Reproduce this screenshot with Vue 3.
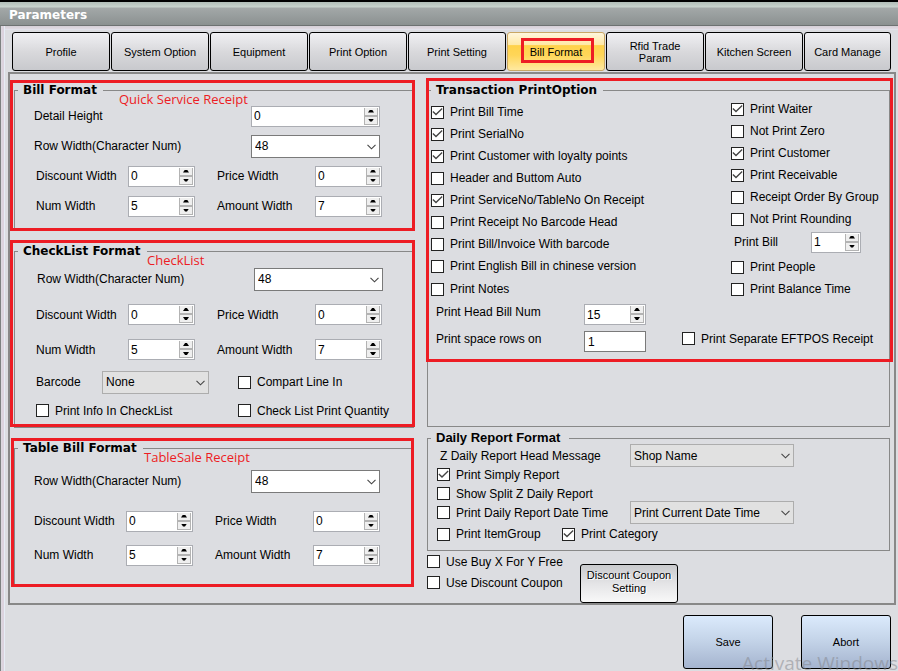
<script setup>
import { reactive, ref } from 'vue'

const tabs = [
  'Profile', 'System Option', 'Equipment', 'Print Option', 'Print Setting',
  'Bill Format', 'Rfid Trade Param', 'Kitchen Screen', 'Card Manage'
]
const activeTab = ref('Bill Format')

const formats = reactive([
  {
    id: 'bill', title: 'Bill Format', note: 'Quick Service Receipt', detail: 0, rowWidth: '48',
    widths: [
      [{ label: 'Discount Width', value: 0 }, { label: 'Price Width', value: 0 }],
      [{ label: 'Num Width', value: 5 }, { label: 'Amount Width', value: 7 }]
    ]
  },
  {
    id: 'checklist', title: 'CheckList Format', note: 'CheckList', rowWidth: '48', barcode: 'None',
    widths: [
      [{ label: 'Discount Width', value: 0 }, { label: 'Price Width', value: 0 }],
      [{ label: 'Num Width', value: 5 }, { label: 'Amount Width', value: 7 }]
    ],
    options: { info: false, line: false, quantity: false }
  },
  {
    id: 'table', title: 'Table Bill Format', note: 'TableSale Receipt', rowWidth: '48',
    widths: [
      [{ label: 'Discount Width', value: 0 }, { label: 'Price Width', value: 0 }],
      [{ label: 'Num Width', value: 5 }, { label: 'Amount Width', value: 7 }]
    ]
  }
])

const printLeft = reactive([
  { label: 'Print Bill Time', on: true },
  { label: 'Print SerialNo', on: true },
  { label: 'Print Customer with loyalty points', on: true },
  { label: 'Header and Buttom Auto', on: false },
  { label: 'Print ServiceNo/TableNo On Receipt', on: true },
  { label: 'Print Receipt No Barcode Head', on: false },
  { label: 'Print Bill/Invoice With barcode', on: false },
  { label: 'Print English Bill in chinese version', on: false },
  { label: 'Print Notes', on: false }
])
const printRightTop = reactive([
  { label: 'Print Waiter', on: true },
  { label: 'Not Print Zero', on: false },
  { label: 'Print Customer', on: true },
  { label: 'Print Receivable', on: true },
  { label: 'Receipt Order By Group', on: false },
  { label: 'Not Print Rounding', on: false }
])
const printRightBottom = reactive([
  { label: 'Print People', on: false },
  { label: 'Print Balance Time', on: false }
])

const form = reactive({
  printBill: 1, headNum: 15, spaceRows: '1', eftpos: false,
  headMessage: 'Shop Name', simply: true, split: false, dateTime: false,
  dateSource: 'Print Current Date Time', itemGroup: false, category: true,
  buyXY: false, coupon: false
})
</script>

<template>
  <main class="window">
    <header class="titlebar"><h1>Parameters</h1></header>
    <div class="body">
      <nav class="tabs">
        <button
          v-for="t in tabs" :key="t" type="button" class="tab"
          :class="{ active: t === activeTab }" @click="activeTab = t"
        >{{ t }}</button>
      </nav>

      <div class="panel">
        <div class="column left">
          <section v-for="f in formats" :key="f.id" class="section marked" :class="f.id">
            <fieldset class="group">
              <legend>{{ f.title }}</legend>
              <div class="rows">
                <div v-if="f.detail !== undefined" class="row wide">
                  <label :for="f.id + '-detail'">Detail Height</label>
                  <span class="spin">
                    <input :id="f.id + '-detail'" v-model.number="f.detail" type="number">
                    <button type="button" class="up" aria-label="Increase" @click="f.detail++"></button>
                    <button type="button" class="down" aria-label="Decrease" @click="f.detail--"></button>
                  </span>
                </div>
                <div class="row wide">
                  <label :for="f.id + '-row'">Row Width(Character Num)</label>
                  <span class="combo white">
                    <select :id="f.id + '-row'" v-model="f.rowWidth"><option>48</option><option>32</option></select>
                    <svg viewBox="0 0 9 6" aria-hidden="true"><path d="M.5 .8 4.5 4.8 8.5 .8" /></svg>
                  </span>
                </div>
                <div v-for="(pair, i) in f.widths" :key="i" class="row quad">
                  <template v-for="(w, j) in pair" :key="w.label">
                    <label :for="f.id + i + j">{{ w.label }}</label>
                    <span class="spin">
                      <input :id="f.id + i + j" v-model.number="w.value" type="number">
                      <button type="button" class="up" aria-label="Increase" @click="w.value++"></button>
                      <button type="button" class="down" aria-label="Decrease" @click="w.value--"></button>
                    </span>
                  </template>
                </div>
                <template v-if="f.options">
                  <div class="row extra">
                    <span class="barcode">
                      <label for="barcode">Barcode</label>
                      <span class="combo">
                        <select id="barcode" v-model="f.barcode"><option>None</option></select>
                        <svg viewBox="0 0 9 6" aria-hidden="true"><path d="M.5 .8 4.5 4.8 8.5 .8" /></svg>
                      </span>
                    </span>
                    <label class="check"><input v-model="f.options.line" type="checkbox">Compart Line In</label>
                  </div>
                  <div class="row extra">
                    <label class="check"><input v-model="f.options.info" type="checkbox">Print Info In CheckList</label>
                    <label class="check"><input v-model="f.options.quantity" type="checkbox">Check List Print Quantity</label>
                  </div>
                </template>
              </div>
            </fieldset>
            <p class="note">{{ f.note }}</p>
          </section>
        </div>

        <div class="column right">
          <section class="section marked transaction">
            <fieldset class="group">
              <legend>Transaction PrintOption</legend>
              <div class="options">
                <div class="list first">
                  <label v-for="o in printLeft" :key="o.label" class="check">
                    <input v-model="o.on" type="checkbox">{{ o.label }}
                  </label>
                </div>
                <div class="list second">
                  <label v-for="o in printRightTop" :key="o.label" class="check">
                    <input v-model="o.on" type="checkbox">{{ o.label }}
                  </label>
                  <div class="bill-count">
                    <label for="print-bill">Print Bill</label>
                    <span class="spin">
                      <input id="print-bill" v-model.number="form.printBill" type="number">
                      <button type="button" class="up" aria-label="Increase" @click="form.printBill++"></button>
                      <button type="button" class="down" aria-label="Decrease" @click="form.printBill--"></button>
                    </span>
                  </div>
                  <label v-for="o in printRightBottom" :key="o.label" class="check">
                    <input v-model="o.on" type="checkbox">{{ o.label }}
                  </label>
                </div>
              </div>
              <div class="counts">
                <label for="head-num">Print Head Bill Num</label>
                <span class="spin">
                  <input id="head-num" v-model.number="form.headNum" type="number">
                  <button type="button" class="up" aria-label="Increase" @click="form.headNum++"></button>
                  <button type="button" class="down" aria-label="Decrease" @click="form.headNum--"></button>
                </span>
                <span></span>
                <label for="space-rows">Print space rows on</label>
                <input id="space-rows" v-model="form.spaceRows" class="text" type="text">
                <label class="check"><input v-model="form.eftpos" type="checkbox">Print Separate EFTPOS Receipt</label>
              </div>
            </fieldset>
          </section>

          <section class="section daily">
            <fieldset class="group">
              <legend>Daily Report Format</legend>
              <div class="daily-rows">
                <div class="daily-row">
                  <label class="message" for="head-message">Z Daily Report Head Message</label>
                  <span class="combo">
                    <select id="head-message" v-model="form.headMessage"><option>Shop Name</option></select>
                    <svg viewBox="0 0 9 6" aria-hidden="true"><path d="M.5 .8 4.5 4.8 8.5 .8" /></svg>
                  </span>
                </div>
                <div class="daily-row">
                  <label class="check"><input v-model="form.simply" type="checkbox">Print Simply Report</label>
                </div>
                <div class="daily-row">
                  <label class="check"><input v-model="form.split" type="checkbox">Show Split Z Daily Report</label>
                </div>
                <div class="daily-row">
                  <label class="check"><input v-model="form.dateTime" type="checkbox">Print Daily Report Date Time</label>
                  <span class="combo">
                    <select v-model="form.dateSource" aria-label="Report date source"><option>Print Current Date Time</option></select>
                    <svg viewBox="0 0 9 6" aria-hidden="true"><path d="M.5 .8 4.5 4.8 8.5 .8" /></svg>
                  </span>
                </div>
                <div class="daily-row last">
                  <label class="check"><input v-model="form.itemGroup" type="checkbox">Print ItemGroup</label>
                  <label class="check"><input v-model="form.category" type="checkbox">Print Category</label>
                </div>
              </div>
            </fieldset>
          </section>

          <div class="coupon">
            <div class="coupon-checks">
              <label class="check"><input v-model="form.buyXY" type="checkbox">Use Buy X For Y Free</label>
              <label class="check"><input v-model="form.coupon" type="checkbox">Use Discount Coupon</label>
            </div>
            <button type="button" class="coupon-button">Discount Coupon Setting</button>
          </div>
        </div>
      </div>

      <footer class="actions">
        <button type="button" class="action">Save</button>
        <button type="button" class="action">Abort</button>
      </footer>
    </div>
    <p class="watermark">Activate Windows</p>
  </main>
</template>

<style>
body {
  margin: 0;
  background: #dcdde1;
}
</style>

<style scoped>
* {
  box-sizing: border-box;
}

.window {
  position: relative;
  display: flex;
  flex-direction: column;
  min-height: 100vh;
  overflow: hidden;
  background: #dcdde1;
  color: #000;
  font: 12px/16px "Liberation Sans", Arial, sans-serif;
}

input,
select,
button {
  margin: 0;
  font: inherit;
  color: inherit;
}

.titlebar {
  height: 26px;
  padding: 0 9px;
  border-top: 2px solid #000;
  border-bottom: 1px solid #6d7272;
  background: linear-gradient(#b1bdb8 0, #c8d3cd 5px, #a3a8a8 6px, #8b9191 100%);
}

h1 {
  margin: 0;
  padding-top: 5px;
  color: #fff;
  font: bold 12px/17px "DejaVu Sans", Verdana, sans-serif;
}

.body {
  display: flex;
  flex: 1;
  flex-direction: column;
  padding-top: 6px;
  background:
    linear-gradient(90deg, #7d8181 1px, #dcdde1 1px, #dcd3de 2px, #dcd3de 4px, #e6ecf5 4px, #e6ecf5 5px, transparent 5px),
    linear-gradient(#d5cfd7 0, #e0dbe3 3px, #e3e9f3 4px, transparent 4px);
}

.tabs {
  display: flex;
  gap: 1px;
  height: 39px;
  padding: 0 7px 0 12px;
}

.tab {
  position: relative;
  flex: 1 1 98px;
  min-width: 0;
  padding: 0 10px;
  border: 1px solid #000;
  border-radius: 3px;
  background: linear-gradient(#f0f0f3, #d9d9dc 50%, #c8c9cd);
  font-size: 11px;
  line-height: 12px;
}

.tab:last-child {
  flex-basis: 87px;
  padding: 0 2px;
}

.tab.active {
  border-color: #c9a765;
  background: linear-gradient(#fff6dc, #ffe9a6 32%, #ffd24a 34%, #ffd658 60%, #ffe9a0);
}

.tab.active::after {
  content: "";
  position: absolute;
  inset: 5px 10px 7px 13px;
  border: 3px solid #ed1c24;
}

.panel {
  display: flex;
  gap: 13px;
  margin: 1px 2px 0 8px;
  padding: 8px 4px 0;
  border: 2px solid #888;
}

.column {
  min-width: 0;
}

.left {
  flex: 0 0 400px;
}

.right {
  display: flex;
  flex: 1;
  flex-direction: column;
}

.section {
  position: relative;
}

.group {
  min-width: 0;
  margin: 0;
  padding: 0;
  border: 1px solid #888;
}

legend {
  margin-left: 3px;
  padding: 0 6px 0 5px;
  font: bold 12px/16px "DejaVu Sans", Verdana, sans-serif;
}

.marked::after {
  content: "";
  position: absolute;
  inset: -2px -1px 0 -4px;
  border: 3px solid #ed1c24;
  pointer-events: none;
}

.checklist,
.table {
  margin-top: 12px;
}

.checklist::after {
  inset: -3px -1px 1px -4px;
}

.table::after {
  inset: -2px 0 -1px -3px;
}

.transaction::after {
  inset: -4px -3px 65px -1px;
}

.note {
  position: absolute;
  top: 8px;
  left: 105px;
  margin: 0;
  color: #ed1c24;
  font: 13px/18px "Open Sans", "Noto Sans", sans-serif;
}

.checklist .note {
  left: 133px;
}

.table .note {
  left: 130px;
}

.rows {
  display: grid;
}

.bill .rows {
  grid-auto-rows: 30px;
  padding: 3px 0 9px 19px;
}

.checklist .rows {
  grid-template-rows: 36px 35px 35px 30px 27px;
  padding: 2px 0 3px 21px;
}

.table .rows {
  grid-template-rows: 40px 40px 28px;
  padding: 5px 0 16px 19px;
}

.row {
  display: grid;
  align-items: center;
}

.wide {
  grid-template-columns: 217px 129px;
}

.quad {
  grid-template-columns: 92px 89px 98px 67px;
}

.quad > .spin {
  width: 67px;
}

.bill .quad {
  padding-left: 2px;
}

.checklist .wide {
  padding-left: 1px;
}

.extra {
  grid-template-columns: 202px 1fr;
}

.barcode {
  display: grid;
  grid-template-columns: 66px 107px;
  align-items: center;
}

.spin {
  position: relative;
  display: block;
  height: 21px;
}

.spin input {
  display: block;
  width: 100%;
  height: 21px;
  padding: 0 18px 0 2px;
  border: 1px solid #abadb3;
  border-radius: 0;
  outline: 0;
  background: #fff;
  appearance: textfield;
}

.spin input::-webkit-inner-spin-button {
  appearance: none;
}

.up,
.down {
  position: absolute;
  top: 2px;
  right: 2px;
  width: 14px;
  height: 8px;
  padding: 0;
  border: 1px solid #b3b3b3;
  border-top: 0;
  background: #efefef;
}

.down {
  top: 10px;
  height: 9px;
  border-top: 1px solid #b3b3b3;
}

.up::before,
.down::before {
  content: "";
  position: absolute;
  top: 2px;
  left: 3px;
  width: 6px;
  height: 3px;
  background: #000;
  clip-path: polygon(34% 0, 66% 0, 100% 100%, 0 100%);
}

.down::before {
  clip-path: polygon(0 0, 100% 0, 66% 100%, 34% 100%);
}

.combo {
  position: relative;
  display: block;
  height: 23px;
}

.combo select {
  display: block;
  width: 100%;
  height: 23px;
  padding: 0 20px 0 3px;
  border: 1px solid #adadad;
  border-radius: 0;
  background: #e1e1e1;
  appearance: none;
}

.combo.white select {
  padding-bottom: 1px;
  border-color: #7a7a7a;
  background: #fff;
}

.combo svg {
  position: absolute;
  top: 9px;
  right: 4px;
  width: 9px;
  height: 6px;
  fill: none;
  stroke: #444;
  stroke-width: 1.1;
  pointer-events: none;
}

.check {
  display: flex;
  align-items: center;
  gap: 6px;
  white-space: nowrap;
}

.check input {
  position: relative;
  flex: none;
  width: 13px;
  height: 13px;
  border: 1px solid #222;
  background: #fff;
  appearance: none;
}

.check input:checked::before {
  content: "";
  position: absolute;
  inset: 0;
  background: #444;
  clip-path: polygon(0.4px 5.4px, 1.3px 4.5px, 4px 7.1px, 9.7px 1.6px, 10.6px 2.5px, 4px 8.9px);
}

.options {
  display: flex;
  justify-content: space-between;
}

.list .check {
  height: 22px;
}

.first {
  padding: 3px 0 0 3px;
}

.first .check:last-child {
  height: 24px;
}

.second {
  width: 158px;
}

.bill-count {
  display: grid;
  grid-template-columns: 77px 50px;
  align-items: center;
  height: 24px;
  margin-bottom: 2px;
  padding-left: 3px;
}

.counts {
  display: grid;
  grid-template-columns: 148px 62px 1fr;
  grid-auto-rows: 27px;
  align-items: center;
  padding: 0 0 71px 8px;
}

.counts > label {
  padding-bottom: 6px;
}

.counts .check {
  padding-left: 36px;
}

.text {
  width: 100%;
  height: 21px;
  padding: 1px 3px 0;
  border: 1px solid #7a7a7a;
  background: #fff;
}

.daily {
  margin-top: 3px;
}

.daily legend {
  padding-right: 9px;
  font: bold 13px/16px "Liberation Sans", Arial, sans-serif;
}

.daily-rows {
  padding: 0 0 4px 9px;
}

.daily-row {
  display: grid;
  grid-template-rows: 19px;
  grid-template-columns: 193px 164px;
  align-items: center;
}

.daily-row .message {
  padding-left: 3px;
}

.daily-row.last {
  grid-template-rows: 24px;
  grid-template-columns: 125px 1fr;
}

.coupon {
  display: flex;
  align-items: flex-end;
  height: 52px;
}

.coupon-checks {
  align-self: flex-start;
  width: 153px;
}

.coupon-checks .check {
  height: 21px;
}

.coupon-button {
  width: 98px;
  height: 39px;
  padding: 0 2px 3px;
  border: 1px solid #000;
  border-radius: 3px;
  background: linear-gradient(#c9cacd, #e4e4e6 50%, #f8f8f8);
  font-size: 11px;
  line-height: 13px;
  text-shadow: 1px 1px 0 #fff;
}

.actions {
  display: flex;
  justify-content: flex-end;
  gap: 28px;
  padding: 10px 7px 2px;
}

.action {
  width: 90px;
  height: 54px;
  border: 1px solid #000;
  border-radius: 3px;
  background: linear-gradient(#dbeafc, #c2d2e7 50%, #a5b4cf);
  font-size: 11px;
}

.watermark {
  position: absolute;
  right: 0;
  bottom: 0;
  margin: 0;
  color: rgba(130, 132, 138, 0.5);
  font: 19px/16px "Open Sans", "Noto Sans", sans-serif;
  white-space: nowrap;
  pointer-events: none;
}
</style>
